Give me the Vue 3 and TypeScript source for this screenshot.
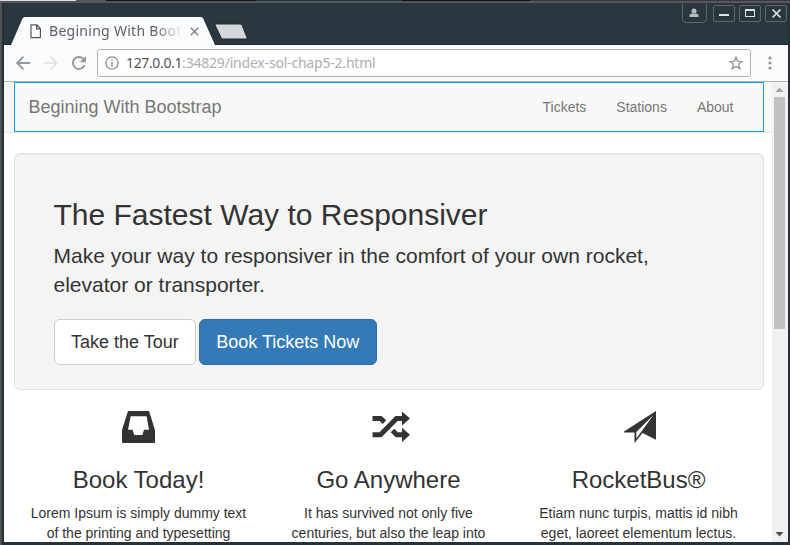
<script setup lang="ts">
interface Feature {
  icon: 'inbox' | 'random' | 'send'
  title: string
  lines: string[]
}

const navLinks: string[] = ['Tickets', 'Stations', 'About']

const features: Feature[] = [
  { icon: 'inbox', title: 'Book Today!', lines: ['Lorem Ipsum is simply dummy text', 'of the printing and typesetting'] },
  { icon: 'random', title: 'Go Anywhere', lines: ['It has survived not only five', 'centuries, but also the leap into'] },
  { icon: 'send', title: 'RocketBus®', lines: ['Etiam nunc turpis, mattis id nibh', 'eget, laoreet elementum lectus.'] },
]
</script>

<template>
  <div class="window">
    <div class="desktop-edge"></div>
    <header class="titlebar">
      <div class="tabs">
        <div class="tab">
          <svg class="tab-shape" width="208" height="28" viewBox="0 0 208 28">
            <path d="M0 28H7L18.500 1.500Q19.200 0 21 0H197Q198.500 0 199.200 1.500L211 28Z" fill="#fafbfd" />
          </svg>
          <svg class="file-icon" width="12" height="15" viewBox="0 0 12 15" fill="none" stroke="#55585b" stroke-width="1.200">
            <path d="M1 .8H6.800L10.400 4.500V13.700H1ZM6.600 1V4.800H10.200" />
          </svg>
          <span class="tab-title">Begining With Boot</span>
          <svg class="tab-close" width="9" height="9" viewBox="0 0 9 9" stroke="#85888b" stroke-width="1.500">
            <path d="M.8.800 8.200 8.200M8.200.800.800 8.200" />
          </svg>
        </div>
        <svg class="new-tab" width="34" height="17" viewBox="0 0 34 17">
          <path d="M1.500 1H26Q27.500 1 28 2L33 14.500Q33.300 16 32 16H9.500Q7.500 16 7 14.500L1 2Z" fill="#d5d7d9" stroke="#202b31" />
        </svg>
      </div>
      <div class="controls">
        <svg class="user-control" width="25" height="19" viewBox="0 0 25 19" fill="none">
          <path d="M.5 0V15Q.5 18.500 4 18.500H21Q24.500 18.500 24.500 15V0" stroke="#5d676c" />
          <circle cx="12" cy="7" r="2.500" fill="#b7bbbd" />
          <path d="M7.500 13V11Q8 9.500 10 9.500H14Q16 9.500 16.500 11V13Z" fill="#b7bbbd" />
        </svg>
        <svg class="control" width="22" height="17" viewBox="0 0 22 17" fill="none">
          <rect x=".5" y=".5" width="21" height="16" rx="1.500" stroke="#5d676c" />
          <path d="M6 10H16" stroke="#e0e2e3" stroke-width="2" />
        </svg>
        <svg class="control" width="22" height="17" viewBox="0 0 22 17" fill="none">
          <rect x=".5" y=".5" width="21" height="16" rx="1.500" stroke="#5d676c" />
          <rect x="6.500" y="4.500" width="9" height="7" stroke="#e0e2e3" />
          <path d="M6 5H16" stroke="#e0e2e3" stroke-width="2" />
        </svg>
        <svg class="control" width="22" height="17" viewBox="0 0 22 17" fill="none">
          <rect x=".5" y=".5" width="21" height="16" rx="1.500" stroke="#5d676c" />
          <path d="M7.500 4.500 15.500 12.500M15.500 4.500 7.500 12.500" stroke="#e0e2e3" stroke-width="1.700" />
        </svg>
      </div>
    </header>

    <div class="toolbar">
      <svg class="back" width="14" height="14" viewBox="0 0 14 14" fill="none" stroke="#94979a" stroke-width="1.900">
        <path d="M14 7H1.500M7.500.700 1.200 7 7.500 13.300" />
      </svg>
      <svg class="forward" width="14" height="14" viewBox="0 0 14 14" fill="none" stroke="#e4e5e7" stroke-width="1.900">
        <path d="M0 7H12.500M6.500.700 12.800 7 6.500 13.300" />
      </svg>
      <svg class="reload" width="14" height="14" viewBox="0 0 14 14">
        <path d="M12.600 9A6 6 0 1 1 11.200 2.700L12.400 4" fill="none" stroke="#94979a" stroke-width="1.900" />
        <path d="M14 0V6.200H7.800Z" fill="#94979a" />
      </svg>
      <div class="address">
        <svg class="info" width="14" height="14" viewBox="0 0 14 14" fill="none" stroke="#8d9093">
          <circle cx="7" cy="7" r="6.200" stroke-width="1.300" />
          <path d="M7 6V10.500M7 3.300V4.800" stroke-width="1.500" />
        </svg>
        <span class="url"><span class="host">127.0.0.1</span>:34829/index-sol-chap5-2.html</span>
        <svg class="star" width="14" height="14" viewBox="0 0 14 14" fill="none" stroke="#94979a" stroke-width="1.400">
          <path d="M7 1.300 8.600 5.200 12.900 5.500 9.600 8.200 10.700 12.700 7 10.300 3.300 12.700 4.400 8.200 1.100 5.500 5.400 5.200Z" />
        </svg>
      </div>
      <svg class="menu" width="4" height="14" viewBox="0 0 4 14" fill="#909396">
        <circle cx="2" cy="2" r="1.600" /><circle cx="2" cy="7" r="1.600" /><circle cx="2" cy="12" r="1.600" />
      </svg>
    </div>

    <div class="viewport">
      <div class="page">
        <div class="navband">
          <nav class="navbar">
            <a class="brand">Begining With Bootstrap</a>
            <div class="links">
              <a v-for="link in navLinks" :key="link">{{ link }}</a>
            </div>
          </nav>
        </div>

        <section class="hero">
          <h2>The Fastest Way to Responsiver</h2>
          <p>Make your way to responsiver in the comfort of your own rocket,<br />elevator or transporter.</p>
          <div class="buttons">
            <button class="btn">Take the Tour</button>
            <button class="btn primary">Book Tickets Now</button>
          </div>
        </section>

        <section class="features">
          <article v-for="feature in features" :key="feature.title">
            <svg v-if="feature.icon === 'inbox'" width="33" height="32" viewBox="0 0 33 32" fill="#333">
              <path fill-rule="evenodd" d="M6 0H27L33 19V31Q33 32 32 32H1Q0 32 0 31V19ZM8.700 5.300 6 18.700H10.600L12.300 24H20.400L22 18.700H27L24.600 5.300Z" />
            </svg>
            <svg v-else-if="feature.icon === 'random'" class="random" width="38" height="32" viewBox="0 0 38 32" fill="#333">
              <path d="M.5 7.500H8.500L12.500 11.200M.5 23.800H8.500L24.500 7.500H31M20.500 19.500 24.800 23.800H31" fill="none" stroke="#333" stroke-width="5" />
              <path d="M30 .5 38 7.500 30 14.500ZM30 16.800 38 23.800 30 31Z" />
            </svg>
            <svg v-else class="send" width="32" height="32" viewBox="0 0 32 32" fill="#333">
              <path d="M32 0 0 20.500V21.500H10.500V32L18.500 22 32 28.800Z" />
              <path d="M29.500 4 12.300 21V27.500Z" fill="#fff" />
            </svg>
            <h3>{{ feature.title }}</h3>
            <p><template v-for="line in feature.lines" :key="line">{{ line }}<br /></template></p>
          </article>
        </section>
      </div>
      <div class="scrollbar">
        <svg width="15" height="15" viewBox="0 0 15 15"><path d="M3.500 10 7.500 5.500 11.500 10Z" fill="#a3a3a3" /></svg>
        <div class="track"><div class="thumb"></div></div>
        <svg width="15" height="15" viewBox="0 0 15 15"><path d="M3.500 5 7.500 9.500 11.500 5Z" fill="#505050" /></svg>
      </div>
    </div>
  </div>
</template>

<style>
body {
  margin: 0;
  overflow: hidden;
}
</style>

<style scoped>
* {
  box-sizing: border-box;
}
svg {
  display: block;
  flex: none;
}
.window {
  width: 790px;
  height: 545px;
  padding: 0 2px 3px 4px;
  display: flex;
  flex-direction: column;
  overflow: hidden;
  background: linear-gradient(90deg, #555 0, #4a4f50 2px, #203037 2px, #263238 4px, #263238 100%);
  font-family: "Liberation Sans", Arial, sans-serif;
  color: #333;
}
.desktop-edge {
  height: 3px;
  flex: none;
  margin: 0 -2px 0 -4px;
  border-bottom: 2px solid #52595d;
  background: linear-gradient(90deg, #dedede 0 76px, #555 76px 106px, #111 106px 256px, #263238 256px 402px, #150d12 402px 530px, #34383c 530px);
}
.titlebar {
  height: 42px;
  flex: none;
  display: flex;
  justify-content: space-between;
  background: #2b373e;
  border-bottom: 1px solid #1f292f;
}
.tabs {
  display: flex;
  padding-top: 14px;
}
.tab {
  position: relative;
  width: 208px;
  height: 28px;
  padding: 0 0 0 26px;
  display: flex;
  align-items: center;
}
.tab-shape {
  position: absolute;
  left: 0;
  top: 0;
  overflow: visible;
}
.file-icon {
  position: relative;
}
.tab-title {
  position: relative;
  width: 134px;
  margin-left: 7px;
  overflow: hidden;
  white-space: nowrap;
  font: 14px/20px "Noto Sans", sans-serif;
  letter-spacing: 0.28px;
  color: #5c5f62;
  -webkit-mask-image: linear-gradient(90deg, #000 105px, transparent 134px);
  mask-image: linear-gradient(90deg, #000 105px, transparent 134px);
}
.tab-close {
  position: relative;
  margin-left: 7px;
}
.new-tab {
  margin: 6px 0 0 2px;
}
.controls {
  display: flex;
  padding: 2px 1px 0 0;
}
.user-control {
  margin: -1px 6px 0 0;
}
.control + .control {
  margin-left: 4px;
}
.toolbar {
  height: 37px;
  flex: none;
  display: flex;
  align-items: center;
  padding: 0 16px 0 12px;
  background: #fafbfd;
  border-bottom: 1px solid #afb1b3;
}
.forward {
  margin-left: 14px;
}
.reload {
  margin-left: 14px;
}
.address {
  flex: 1;
  height: 28px;
  margin: 0 17px 0 11px;
  padding: 0 7px;
  display: flex;
  align-items: center;
  background: #fff;
  border: 1px solid #aeb0b1;
  border-radius: 3px;
}
.url {
  flex: 1;
  margin-left: 7px;
  font: 14px/20px "Noto Sans", sans-serif;
  letter-spacing: -0.2px;
  color: #acafb2;
  white-space: nowrap;
}
.host {
  letter-spacing: -0.36px;
  color: #505356;
}
.viewport {
  flex: 1;
  min-height: 0;
  display: flex;
  background: #fff;
}
.page {
  flex: 1;
  min-width: 0;
  overflow: hidden;
}
.navband {
  height: 51px;
  padding: 0 8px 0 10px;
  background: #f8f8f8;
  border-bottom: 1px solid #e7e7e7;
}
.navbar {
  height: 50px;
  padding: 0 14.5px 0 13.5px;
  display: flex;
  align-items: center;
  justify-content: space-between;
  border: 1px solid #109df0;
  color: #777;
}
.brand {
  font-size: 18px;
  line-height: 20px;
}
.links {
  display: flex;
  font-size: 14px;
  line-height: 20px;
}
.links a {
  padding: 0 15px;
}
.hero {
  height: 237px;
  margin: 20px 8px 0 10px;
  padding: 44px 39px 0 38.5px;
  background: #f4f4f4;
  border: 1px solid #e1e1e1;
  border-radius: 6px;
  box-shadow: inset 0 1px 1px rgba(0, 0, 0, 0.05);
}
.hero h2 {
  margin: 0 0 10px;
  font-size: 30px;
  font-weight: 400;
  line-height: 33px;
}
.hero p {
  margin: 0 0 19px;
  font-size: 21px;
  line-height: 29.4px;
}
.buttons {
  display: flex;
  gap: 3px;
  padding-left: 0.5px;
}
.btn {
  height: 46px;
  padding: 0 16px;
  border: 1px solid #ccc;
  border-radius: 6px;
  background: #fff;
  color: #333;
  font: 18px/24px "Liberation Sans", Arial, sans-serif;
  white-space: nowrap;
}
.btn.primary {
  padding: 0 16.5px;
  border-color: #2e6da4;
  background: #337ab7;
  color: #fff;
}
.features {
  display: grid;
  grid-template-columns: repeat(3, 250px);
  padding: 21px 0 0 9.5px;
}
.features article {
  display: flex;
  flex-direction: column;
  align-items: center;
  text-align: center;
}
.features h3 {
  margin: 24px 0 10px;
  font-size: 24px;
  font-weight: 400;
  line-height: 26px;
}
.features p {
  margin: 0;
  font-size: 14px;
  line-height: 20px;
  white-space: nowrap;
}
.random {
  margin-left: 5px;
}
.send {
  margin-left: 2px;
}
.scrollbar {
  width: 16px;
  padding-right: 1px;
  display: flex;
  flex-direction: column;
  background: #f1f1f1;
}
.track {
  flex: 1;
  padding: 0 2px;
}
.thumb {
  height: 232px;
  background: #c1c1c1;
}
</style>
